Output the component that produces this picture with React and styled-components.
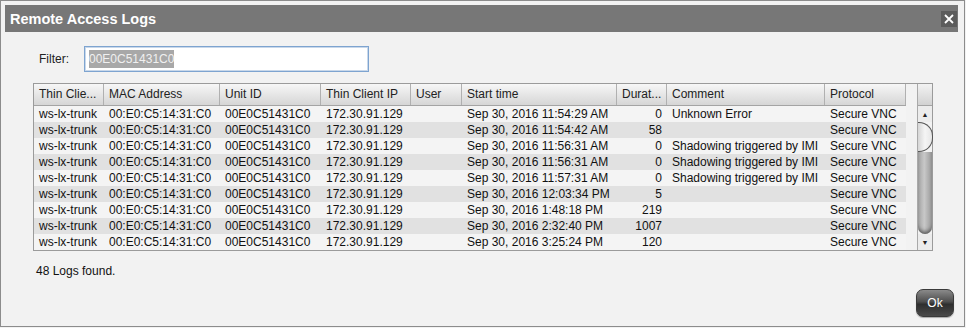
import React from 'react';
import styled, { createGlobalStyle } from 'styled-components';

const GlobalStyle = createGlobalStyle`
  html, body {
    margin: 0;
    padding: 0;
    background: #f2f2f2;
  }
  body {
    font-family: "Liberation Sans", Arial, sans-serif;
    font-size: 12px;
    color: #111;
  }
`;

const Window = styled.div`
  width: 965px;
  height: 327px;
  box-sizing: border-box;
  border: 1px solid #8c8c8c;
  background: #f2f2f2;
  padding: 4px 6px 0 4px;
  display: flex;
  flex-direction: column;
`;

const TitleBar = styled.div`
  height: 27px;
  background: #777777;
  display: flex;
  align-items: center;
  justify-content: space-between;
  padding: 0 1px 0 5px;
`;

const Title = styled.h1`
  margin: 0;
  font-size: 14.5px;
  font-weight: 700;
  color: #fff;
`;

const CloseButton = styled.button`
  width: 16px;
  height: 16px;
  padding: 0;
  border: none;
  background: #5c5c5c;
  display: flex;
  align-items: center;
  justify-content: center;
`;

const Content = styled.div`
  padding: 14px 25px 0 28px;
  display: flex;
  flex-direction: column;
`;

const FilterRow = styled.div`
  display: flex;
  align-items: center;
  gap: 15px;
  padding-left: 6px;
`;

const Label = styled.label`
  color: #222;
`;

const FilterBox = styled.div`
  width: 279px;
  height: 24px;
  border: 1px solid #7ea4d0;
  box-shadow: inset 0 0 0 1px #c9d8ea;
  background: #fff;
  display: flex;
  align-items: center;
  padding-left: 4px;
  box-sizing: content-box;
`;

const Selected = styled.span`
  background: #a8a8a8;
  color: #f0f0f0;
  padding: 1px 0;
  line-height: 16px;
`;

const TableFrame = styled.div`
  margin-top: 11px;
  border: 1px solid #9b9b9b;
  display: flex;
  height: 166px;
`;

const Grid = styled.div`
  width: 872px;
  display: flex;
  flex-direction: column;
`;

const HeaderRow = styled.div`
  display: flex;
  height: 21px;
  border-bottom: 1px solid #a4a4a4;
  background: linear-gradient(#f7f7f7, #e6e6e6 50%, #d6d6d6);
`;

const HeadCell = styled.div`
  width: ${p => p.$w}px;
  box-sizing: border-box;
  padding-left: 5px;
  line-height: 21px;
  color: #222;
  border-right: 1px solid #b0b0b0;
  white-space: nowrap;
  overflow: hidden;
`;

const Row = styled.div`
  display: flex;
  height: 16px;
  background: ${p => (p.$odd ? '#e1e1e1' : '#f4f4f4')};
`;

const Cell = styled.div`
  width: ${p => p.$w}px;
  box-sizing: border-box;
  padding: 0 5px;
  line-height: 16px;
  text-align: ${p => (p.$right ? 'right' : 'left')};
  white-space: nowrap;
  overflow: hidden;
`;

const Gap = styled.div`
  width: 12px;
`;

const ScrollBar = styled.div`
  width: 16px;
  border-left: 1px solid #a9a9a9;
  display: flex;
  flex-direction: column;
`;

const ScrollHead = styled.div`
  height: 21px;
  border-bottom: 1px solid #a4a4a4;
  background: linear-gradient(#f2f2f2, #d2d2d2);
`;

const Arrow = styled.div`
  height: 16px;
  background: #ececec;
  display: flex;
  align-items: center;
  justify-content: center;
  font-size: 7px;
  color: #222;
`;

const Thumb = styled.div`
  height: 28px;
  background: linear-gradient(90deg, #d6d6d6, #f5f5f5 50%, #e6e6e6);
  border: 1px solid #555;
  border-left: none;
  border-radius: 0 14px 14px 0;
  margin-right: -1px;
`;

const Track = styled.div`
  flex: 1;
  background: linear-gradient(90deg, #a4a4a4, #c8c8c8 45%, #9a9a9a);
  border-radius: 0 0 8px 8px;
  box-shadow: inset 0 -4px 4px -2px #555;
`;

const Count = styled.div`
  margin-top: 13px;
  padding-left: 3px;
`;

const Footer = styled.div`
  display: flex;
  justify-content: flex-end;
  padding: 11px 4px 0 0;
`;

const OkButton = styled.button`
  width: 38px;
  height: 28px;
  border: 1px solid #3a3a3a;
  border-radius: 7px;
  background: linear-gradient(#8a8a8a, #4e4e4e 45%, #2e2e2e 55%, #4a4a4a);
  color: #fff;
  font-family: "Liberation Sans", Arial, sans-serif;
  font-size: 12px;
  padding: 0;
  box-shadow: 0 1px 1px rgba(0, 0, 0, 0.3);
`;

const columns = [
  { title: 'Thin Clie...', w: 70 },
  { title: 'MAC Address', w: 116 },
  { title: 'Unit ID', w: 101 },
  { title: 'Thin Client IP', w: 90 },
  { title: 'User', w: 51 },
  { title: 'Start time', w: 155 },
  { title: 'Durat...', w: 50, right: true },
  { title: 'Comment', w: 158 },
  { title: 'Protocol', w: 81 },
];

const shadow = 'Shadowing triggered by IMI';
const logs = [
  ['Sep 30, 2016 11:54:29 AM', '0', 'Unknown Error'],
  ['Sep 30, 2016 11:54:42 AM', '58', ''],
  ['Sep 30, 2016 11:56:31 AM', '0', shadow],
  ['Sep 30, 2016 11:56:31 AM', '0', shadow],
  ['Sep 30, 2016 11:57:31 AM', '0', shadow],
  ['Sep 30, 2016 12:03:34 PM', '5', ''],
  ['Sep 30, 2016 1:48:18 PM', '219', ''],
  ['Sep 30, 2016 2:32:40 PM', '1007', ''],
  ['Sep 30, 2016 3:25:24 PM', '120', ''],
];

export default function App() {
  return (
    <>
      <GlobalStyle />
      <Window>
        <TitleBar>
          <Title>Remote Access Logs</Title>
          <CloseButton aria-label="Close">
            <svg width="10" height="10" viewBox="0 0 10 10">
              <path d="M1 1L9 9M9 1L1 9" stroke="#fff" strokeWidth="1.8" />
            </svg>
          </CloseButton>
        </TitleBar>
        <Content>
          <FilterRow>
            <Label>Filter:</Label>
            <FilterBox>
              <Selected>00E0C51431C0</Selected>
            </FilterBox>
          </FilterRow>
          <TableFrame>
            <Grid>
              <HeaderRow>
                {columns.map(c => (
                  <HeadCell key={c.title} $w={c.w}>{c.title}</HeadCell>
                ))}
              </HeaderRow>
              {logs.map((l, i) => {
                const values = ['ws-lx-trunk', '00:E0:C5:14:31:C0', '00E0C51431C0', '172.30.91.129', '', l[0], l[1], l[2], 'Secure VNC'];
                return (
                  <Row key={i} $odd={i % 2 === 1}>
                    {columns.map((c, j) => (
                      <Cell key={j} $w={c.w} $right={c.right}>{values[j]}</Cell>
                    ))}
                  </Row>
                );
              })}
            </Grid>
            <Gap />
            <ScrollBar>
              <ScrollHead />
              <Arrow>▲</Arrow>
              <Thumb />
              <Track />
              <Arrow>▼</Arrow>
            </ScrollBar>
          </TableFrame>
          <Count>48 Logs found.</Count>
        </Content>
        <Footer>
          <OkButton>Ok</OkButton>
        </Footer>
      </Window>
    </>
  );
}
